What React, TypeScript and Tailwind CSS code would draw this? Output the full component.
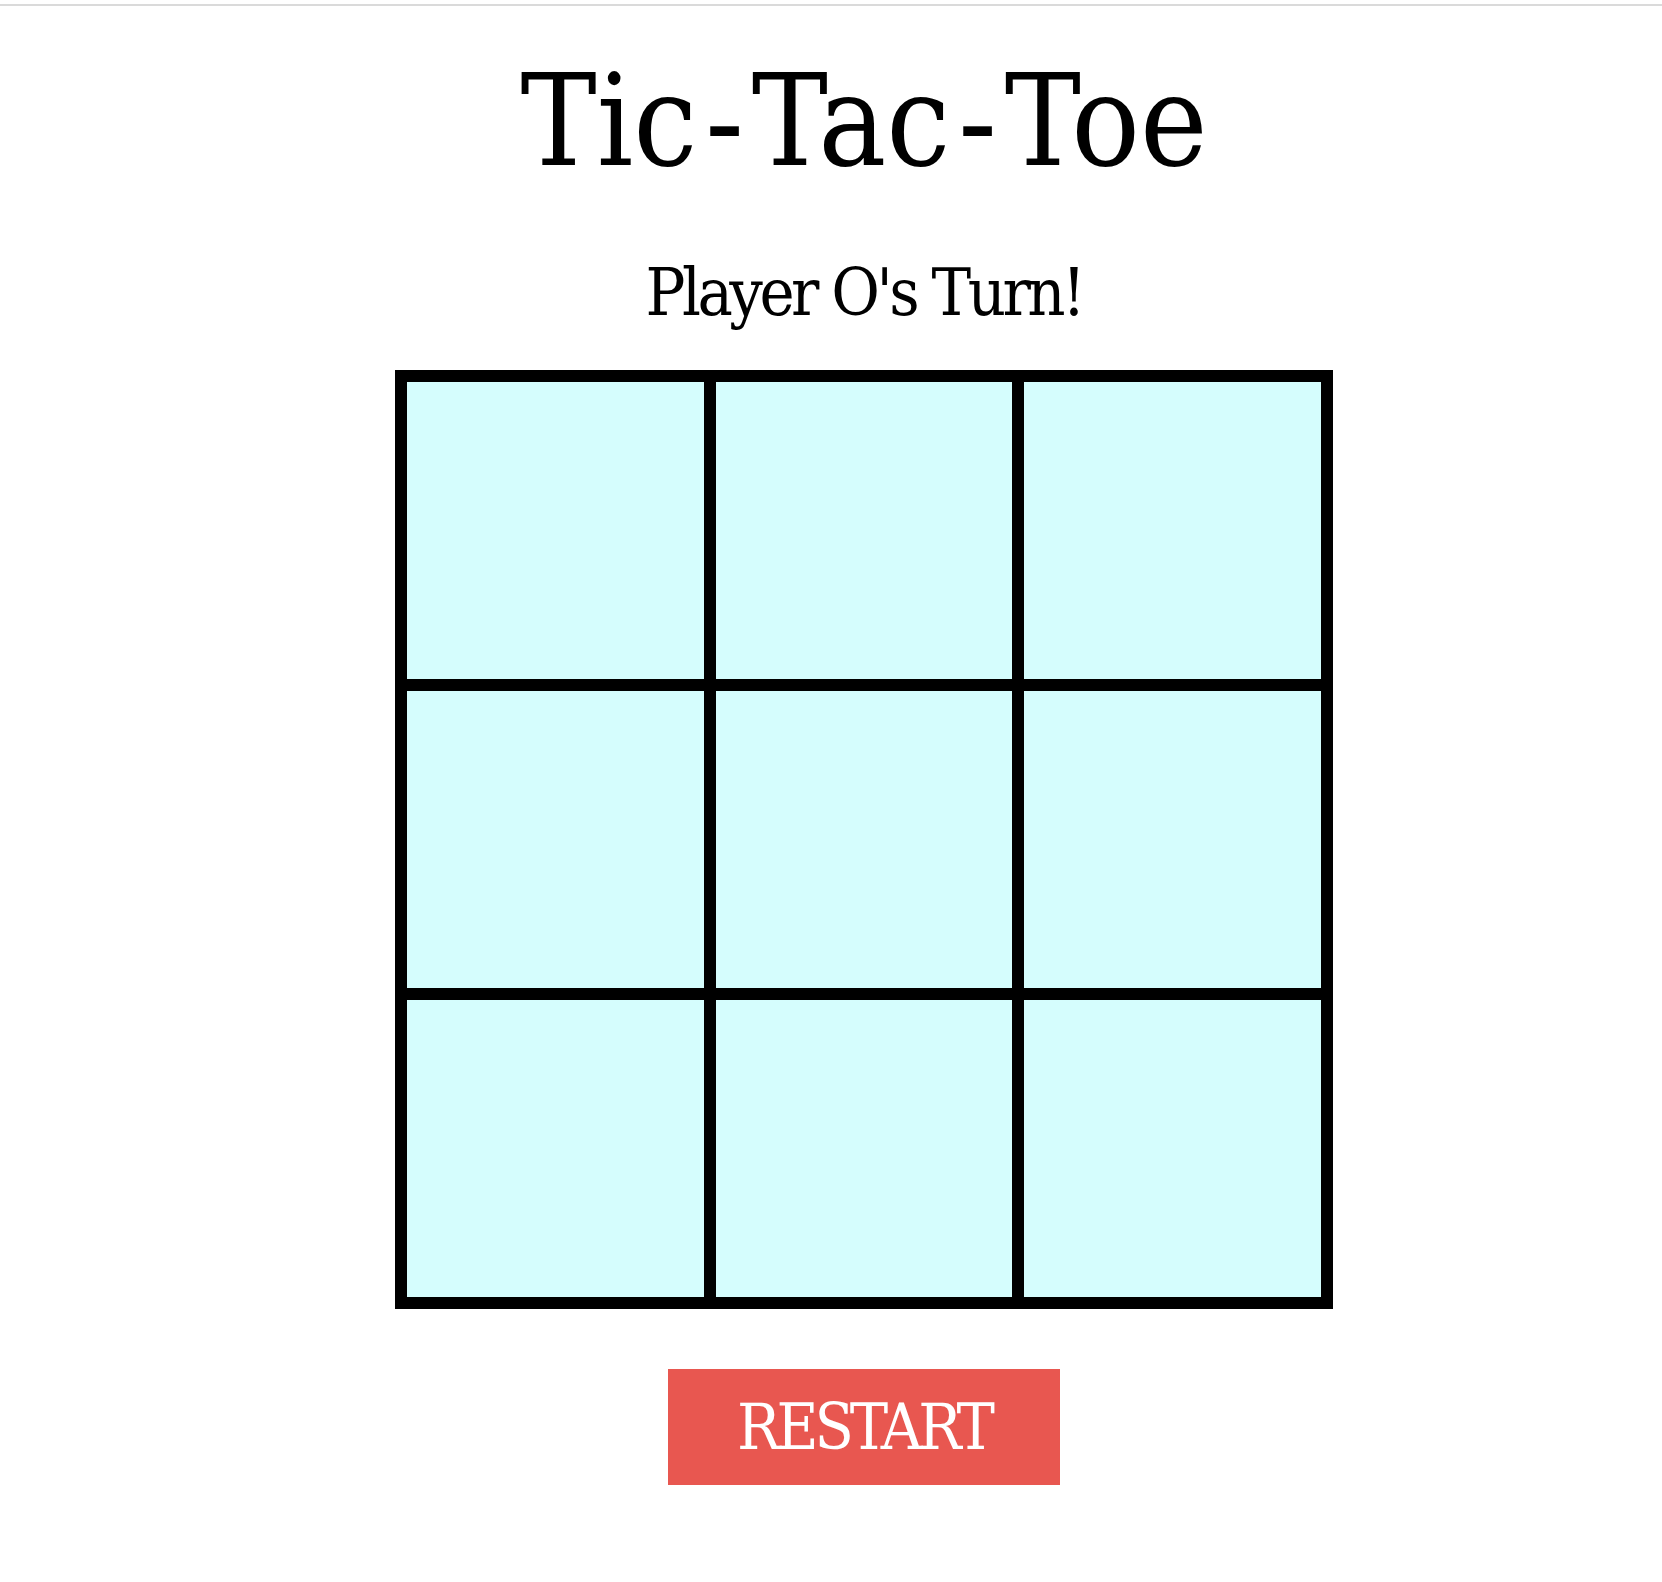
const cells = Array.from({ length: 9 }, (_, i) => i);

const serif = "font-['DejaVu_Serif_Condensed','DejaVu_Serif',serif] font-stretch-condensed";

export default function App() {
  return (
    <div className="min-h-screen bg-white">
      <div className="mt-[4px] h-[2px] bg-[#dadada]" />
      <div className="flex flex-col items-center pl-[66px]">
        <h1 className={`${serif} mt-[52px] text-[127px] leading-none text-black`}>
          Tic<span className="mx-[8px]">-</span>Tac<span className="mx-[8px]">-</span>Toe
        </h1>
        <p className={`${serif} mt-[75px] text-[66px] leading-none tracking-[-3.5px] text-black`}>
          Player O's Turn!
        </p>
        <div className="mt-[44px] grid w-[938px] grid-cols-3 gap-[12px] bg-black p-[12px]">
          {cells.map((c) => (
            <div key={c} className="h-[297px] bg-[#d5fdfd]" />
          ))}
        </div>
        <button
          className={`${serif} mt-[60px] flex h-[116px] w-[392px] items-center justify-center bg-[#e85750] text-[64px] leading-none tracking-[-4px] text-white`}
        >
          RESTART
        </button>
      </div>
    </div>
  );
}
